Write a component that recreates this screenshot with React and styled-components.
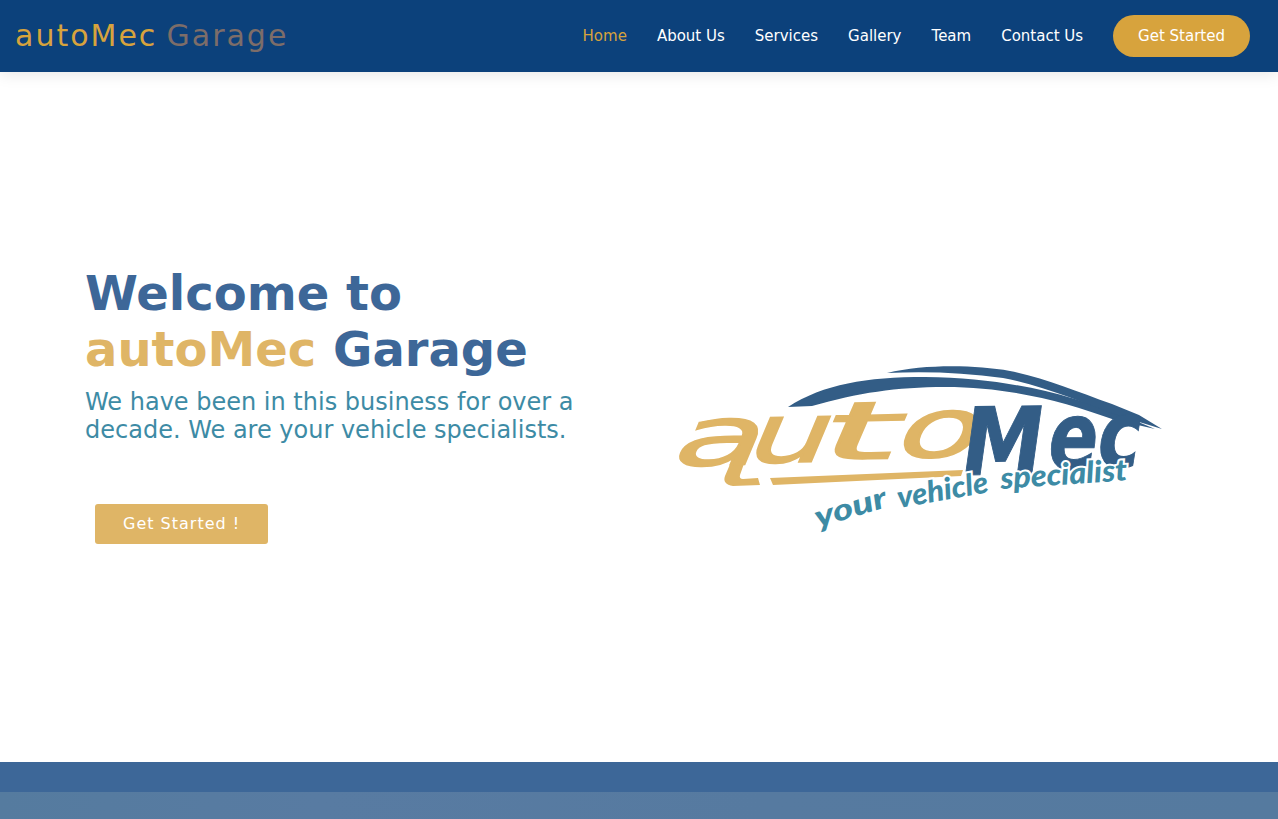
import React from "react";
import styled, { createGlobalStyle } from "styled-components";

const GlobalStyle = createGlobalStyle`
  * { box-sizing: border-box; }
  body { margin: 0; background: #fff; font-family: "DejaVu Sans", sans-serif; }
  a { text-decoration: none; }
`;
const Page = styled.div`
  height: 100vh;
  display: flex;
  flex-direction: column;
  overflow: hidden;
`;
const Header = styled.header`
  flex: 0 0 72px;
  display: flex;
  align-items: center;
  justify-content: space-between;
  padding: 0 28px 0 15px;
  background: #0c417b;
  box-shadow: 0 2px 15px rgba(0, 0, 0, 0.1);
`;
const Brand = styled.a`
  font-size: 30px;
  line-height: 36px;
  letter-spacing: 2px;
  word-spacing: -2.4px;
  color: #7d6d69;
`;
const Gold = styled.span`
  color: ${(p) => p.$tone};
`;
const Nav = styled.nav`
  display: flex;
  align-items: center;
  gap: 30px;
`;
const NavLink = styled.a`
  font-size: 15px;
  line-height: 18px;
  color: ${(p) => (p.$active ? "#d7a33d" : "#fff")};
`;
const NavButton = styled.a`
  padding: 12px 25px;
  border-radius: 50px;
  font-size: 15px;
  line-height: 18px;
  background: #d7a33d;
  color: #fff;
`;
const Hero = styled.main`
  flex: 0 0 690px;
  display: grid;
  grid-template-columns: 555px 555px;
  padding: 193px 84px 0 85px;
`;
const Copy = styled.section`
  display: flex;
  flex-direction: column;
  align-items: flex-start;
`;
const Title = styled.h1`
  margin: 0 0 11px;
  font-size: 48px;
  font-weight: 700;
  line-height: 56px;
  color: #3d6798;
`;
const Lead = styled.p`
  margin: 0;
  font-size: 24px;
  line-height: 28px;
  color: #3d8ba5;
`;
const StartButton = styled.a`
  margin: 60px 0 0 10px;
  padding: 10px 28px;
  border-radius: 3px;
  font-size: 16px;
  line-height: 20px;
  letter-spacing: 1px;
  background: #dfb566;
  color: #fff;
`;
const LogoBox = styled.div`
  padding: 90px 0 0 30px;
`;
const LogoSvg = styled.svg`
  display: block;
  width: 500px;
  height: 190px;
  overflow: visible;
`;
const BlueBand = styled.div`
  flex: 0 0 30px;
  background: #3d6798;
`;
const PhotoBand = styled.div`
  flex: 1;
  background: linear-gradient(90deg, #557b9f, #587ba2 25%, #567aa0 60%, #557a9f);
`;

const links = ["Home", "About Us", "Services", "Gallery", "Team", "Contact Us"];

function Logo() {
  return (
    <LogoSvg viewBox="670 355 500 190" role="img" aria-label="autoMec your vehicle specialist">
      <g fill="#335d86">
        <path d="M788 407C824 384 866 377 925 377C1010 378 1070 395 1124 416L1155 429L1112 419C1065 402 1010 387 945 387C896 387 858 393 812 406Z" />
        <path d="M887 373C925 364 975 365 1010 371C1045 378 1075 391 1112 404L1139 415L1162 429L1123 417C1080 402 1045 386 1003 378Q945 370 887 373Z" />
      </g>
      <path fill="#dfb566" d="M770 478L963 470L961 476L773 485Z" />
      <path fill="#dfb566" d="M731 462L746 458L740 475Q739 479 743 479L758 478L760 485L733 486Q722 484 725 476Z" />
      <g fill="#dfb566" stroke="#dfb566" strokeWidth="1.6" strokeLinejoin="miter" fontFamily="DejaVu Sans" fontSize="83">
        <text transform="matrix(1.78 -0.035 -0.42 1 667 466)">a</text>
        <text transform="matrix(1.55 -0.03 -0.42 1 741 463)">u</text>
        <text transform="matrix(2.4 -0.05 -0.42 .97 813 460)">t</text>
        <text transform="matrix(1.65 -0.035 -0.42 1 890 458)">o</text>
      </g>
      <g fill="#335d86" stroke="#335d86" strokeWidth="1" fontFamily="DejaVu Sans" fontWeight="700" fontSize="94">
        <text transform="matrix(.87 -.01 -.14 1 958 475)">M</text>
        <text transform="matrix(.78 0 -.14 1 1045 469)">e</text>
        <text transform="matrix(.78 0 -.16 1 1094 467)">c</text>
      </g>
      <g fill="#3d8ba5" stroke="#fff" strokeWidth="4" paintOrder="stroke" fontFamily="Lato" fontWeight="900" fontStyle="italic" fontSize="30">
        <text transform="translate(818 528) rotate(-17)" textLength="74" lengthAdjust="spacingAndGlyphs">your</text>
        <text transform="translate(899 508) rotate(-10)" textLength="92" lengthAdjust="spacingAndGlyphs">vehicle</text>
        <text transform="translate(1001 489) rotate(-4)" textLength="127" lengthAdjust="spacingAndGlyphs">specialist</text>
      </g>
    </LogoSvg>
  );
}

export default function App() {
  return (
    <Page>
      <GlobalStyle />
      <Header>
        <Brand href="#"><Gold $tone="#d7a33d">autoMec</Gold> Garage</Brand>
        <Nav>
          {links.map((label, i) => (
            <NavLink key={label} href="#" $active={i === 0}>{label}</NavLink>
          ))}
          <NavButton href="#">Get Started</NavButton>
        </Nav>
      </Header>
      <Hero>
        <Copy>
          <Title>Welcome to<br /><Gold $tone="#dfb566">autoMec</Gold> Garage</Title>
          <Lead>We have been in this business for over a<br />decade. We are your vehicle specialists.</Lead>
          <StartButton href="#">Get Started !</StartButton>
        </Copy>
        <LogoBox><Logo /></LogoBox>
      </Hero>
      <BlueBand />
      <PhotoBand />
    </Page>
  );
}
